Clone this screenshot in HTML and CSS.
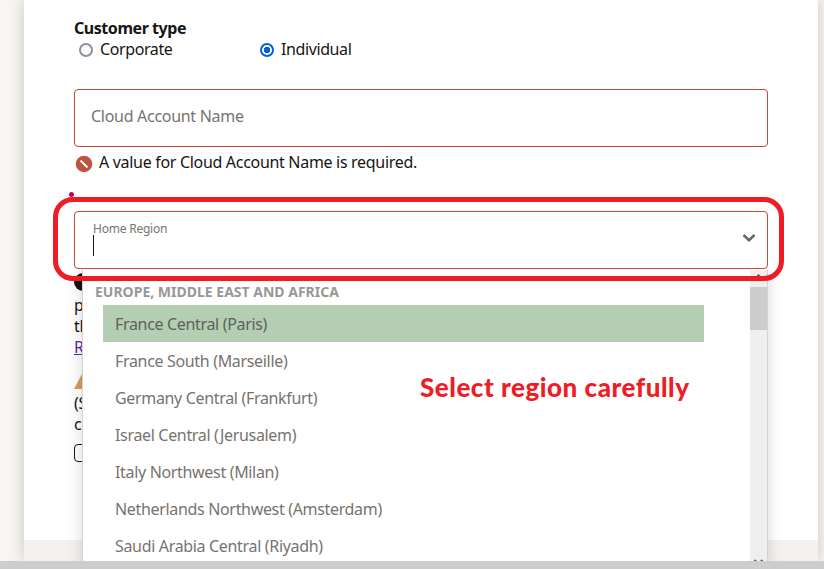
FILE: index.html
```html
<!DOCTYPE html>
<html lang="en">
<head>
<meta charset="utf-8">
<title>Account information</title>
<link rel="stylesheet" href="styles.css">
</head>
<body>
<div class="page">
  <main class="card">
    <form class="form">
      <h2 class="group-title">Customer type</h2>
      <div class="choices">
        <label class="choice"><span class="radio"></span><span class="choice-text">Corporate</span></label>
        <label class="choice"><span class="radio radio-on"></span><span class="choice-text">Individual</span></label>
      </div>
      <div class="field"><span class="placeholder">Cloud Account Name</span></div>
      <div class="error">
        <svg width="18" height="18" viewBox="0 0 18 18"><circle cx="9" cy="9" r="8.3" fill="#bd5441"/><path d="M5.500 5.500l7 7" stroke="#fff" stroke-width="1.8"/></svg>
        <span class="error-text">A value for Cloud Account Name is required.</span>
      </div>
      <div class="field region">
        <span class="required"></span>
        <span class="region-label">Home Region</span>
        <span class="caret"></span>
        <svg class="chevron" width="14" height="10" viewBox="0 0 14 10"><path d="M1.500 2L7 7.200 12.500 2" fill="none" stroke="#666" stroke-width="2.500"/></svg>
        <div class="highlight"></div>
        <div class="menu">
          <div class="options">
            <div class="group">EUROPE, MIDDLE EAST AND AFRICA</div>
            <div class="option active">France Central (Paris)</div>
            <div class="option">France South (Marseille)</div>
            <div class="option">Germany Central (Frankfurt)</div>
            <div class="option">Israel Central (Jerusalem)</div>
            <div class="option">Italy Northwest (Milan)</div>
            <div class="option">Netherlands Northwest (Amsterdam)</div>
            <div class="option">Saudi Arabia Central (Riyadh)</div>
          </div>
          <div class="scrollbar">
            <svg width="17" height="17" viewBox="0 0 17 17"><path d="M5 9l3.500-3.500L12 9" fill="none" stroke="#555" stroke-width="2"/></svg>
            <div class="thumb"></div>
            <svg class="down" width="17" height="5" viewBox="0 0 17 5"><path d="M4.500 2l4 4 4-4" fill="none" stroke="#555" stroke-width="2"/></svg>
          </div>
        </div>
        <div class="note">Select region carefully</div>
      </div>
      <div class="below">
        <svg class="info" width="18" height="18" viewBox="0 0 18 18"><circle cx="9" cy="9" r="9" fill="#161513"/></svg>
        <div class="line">p</div>
        <div class="line">th</div>
        <div class="line link">R</div>
        <svg class="warning" width="20" height="17" viewBox="0 0 20 17"><path d="M0 17L9 0l11 17z" fill="#d3a05a"/></svg>
        <div class="line">(S</div>
        <div class="line">cr</div>
        <div class="check"></div>
      </div>
    </form>
    <div class="footer"></div>
  </main>
</div>
<div class="window-bar"></div>
</body>
</html>
```
FILE: styles.css
```css
* { box-sizing: border-box; }
body {
  margin: 0;
  width: 824px;
  height: 569px;
  overflow: hidden;
  background: #f7f6f2;
  color: #161513;
  font: 16px/21px "Noto Sans", sans-serif;
}
svg { display: block; flex: none; }
span { white-space: nowrap; }
.page {
  height: 561px;
  padding: 0 6px 0 24px;
  overflow: hidden;
}
.card {
  display: flex;
  flex-direction: column;
  height: 561px;
  background: #fff;
  box-shadow: 0 0 14px rgba(50, 45, 35, .24);
}
.form { height: 540px; padding: 18px 50px 0; }
.footer { height: 21px; background: #f3f2f1; }
.window-bar { position: relative; z-index: 5; height: 8px; background: #cdcdcd; }
.group-title { margin: 0; font-size: 16px; line-height: 21px; letter-spacing: -.45px; }
.choices { display: grid; grid-template-columns: 181px 200px; height: 50px; padding-left: 5px; }
.choice { display: flex; align-items: center; gap: 7px; height: 21px; }
.choice-text { letter-spacing: -.4px; }
.radio { width: 14px; height: 14px; border: 2px solid #8f8f9d; border-radius: 50%; background: #fff; }
.radio-on { border-color: #0060df; background: radial-gradient(circle, #0060df 0 3px, #fff 3.5px); }
.field {
  display: flex;
  align-items: center;
  width: 694px;
  height: 58px;
  padding: 0 16px 3px;
  border: 1px solid #c74634;
  border-radius: 4px;
  background: #fff;
}
.placeholder { color: #77736f; letter-spacing: -.29px; }
.error { display: flex; height: 64px; padding: 5px 0 0 1px; gap: 6px; }
.error svg { margin-top: 3px; }
.error-text { letter-spacing: -.31px; }
.region { position: relative; flex-direction: column; align-items: flex-start; padding: 8px 0 0 18px; }
.region-label { font-size: 12px; line-height: 18px; letter-spacing: -.22px; color: #77736f; }
.required { position: absolute; left: -6px; top: -20px; width: 5px; height: 5px; border-radius: 50%; background: #c50056; }
.caret { width: 1px; height: 21px; margin-top: -3px; background: #161513; }
.chevron { position: absolute; top: 21px; right: 11px; }
.highlight {
  position: absolute;
  z-index: 3;
  left: -22px;
  top: -15px;
  width: 731px;
  height: 84px;
  border: 5px solid #ee1c24;
  border-radius: 20px;
}
.menu {
  position: absolute;
  z-index: 2;
  left: 7px;
  top: 58px;
  display: flex;
  width: 686px;
  height: 300px;
  border: solid #d3d3d3;
  border-width: 0 1px;
  background: #fff;
  box-shadow: 0 2px 15px rgba(0, 0, 0, .15);
  clip-path: inset(0 -20px -20px);
}
.options { flex: 1; padding: 11px 46px 0 20px; color: #77736f; }
.group { height: 24px; margin-left: -8px; font-size: 14px; font-weight: 700; color: #999795; white-space: nowrap; }
.option { height: 37px; padding: 9px 12px 0; letter-spacing: -.33px; }
.active { background: #b3ceb3; color: #5b625a; }
.scrollbar { width: 17px; background: #efefef; }
.thumb { height: 43px; background: #cdcdcd; }
.down { margin-top: 228px; }
.note {
  position: absolute;
  z-index: 4;
  left: 345px;
  top: 158px;
  color: #ee1c24;
  font: 900 26px/34px Lato, sans-serif;
  letter-spacing: .52px;
  white-space: nowrap;
}
.below { width: 30px; padding-top: 4px; }
.line { height: 21px; letter-spacing: -.4px; white-space: nowrap; }
.info { margin-bottom: 4px; }
.link { color: #5f249f; text-decoration: underline; }
.warning { margin: 14px 0 4px; }
.check { width: 19px; height: 18px; margin-top: 9px; border: 1px solid #161513; border-radius: 4px; }
```
